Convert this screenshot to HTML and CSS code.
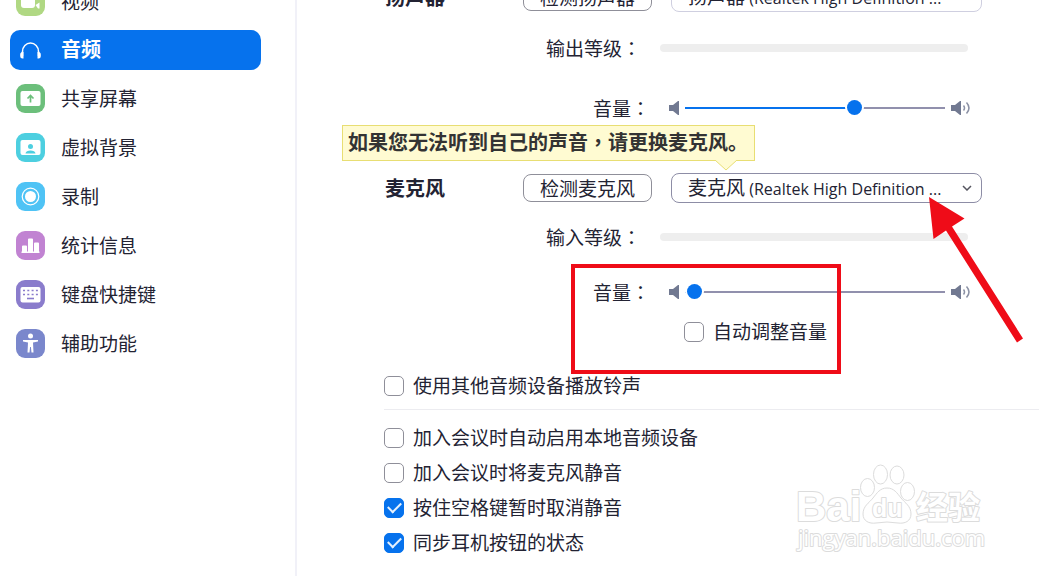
FILE: index.html
```html
<!DOCTYPE html>
<html lang="zh-CN">
<head>
<meta charset="utf-8">
<title>音频设置</title>
<link rel="stylesheet" href="styles.css">
</head>
<body>
<div class="settings">
  <nav class="sidebar">
    <a class="nav-item" href="#video">
      <svg class="nav-icon" viewBox="0 0 29 29"><rect width="29" height="29" rx="9" fill="#b0d883"/><rect x="5" y="8" width="14" height="13" rx="3" fill="#fff"/><path d="M19.500 18l4-2.500v6h-1.500z" fill="#fff"/></svg>
      <span>视频</span>
    </a>
    <a class="nav-item active" href="#audio" aria-current="page">
      <svg class="nav-icon" viewBox="0 0 29 29"><path d="M6.500 20V15.500a8 8.500 0 0 1 16 0V20" fill="none" stroke="#fff" stroke-width="1.500"/><path d="M7.500 16v6.500H6.500a2.300 2.300 0 0 1-2.300-2.300v-1.500a2.500 2.500 0 0 1 3.300-2.700zM21.500 16v6.500h1a2.300 2.300 0 0 0 2.300-2.300v-1.500a2.500 2.500 0 0 0-3.300-2.700z" fill="#fff"/></svg>
      <span>音频</span>
    </a>
    <a class="nav-item" href="#share">
      <svg class="nav-icon" viewBox="0 0 29 29"><rect width="29" height="29" rx="9" fill="#6cbf7b"/><rect x="4.500" y="7" width="20" height="15" rx="2" fill="#fff"/><path d="M14.500 18.500v-6M11.500 14.500l3-3 3 3" fill="none" stroke="#6cbf7b" stroke-width="1.700"/></svg>
      <span>共享屏幕</span>
    </a>
    <a class="nav-item" href="#background">
      <svg class="nav-icon" viewBox="0 0 29 29"><rect width="29" height="29" rx="9" fill="#4dcfe0"/><rect x="4.500" y="7" width="20" height="15" rx="2" fill="#fff"/><circle cx="14.500" cy="13.500" r="2.500" fill="#4dcfe0"/><path d="M9.500 20.500c0-4 10-4 10 0z" fill="#4dcfe0"/></svg>
      <span>虚拟背景</span>
    </a>
    <a class="nav-item" href="#record">
      <svg class="nav-icon" viewBox="0 0 29 29"><rect width="29" height="29" rx="9" fill="#4fc3f5"/><circle cx="14.500" cy="14.500" r="8.300" fill="none" stroke="#fff" stroke-width="1.200"/><circle cx="14.500" cy="14.500" r="5.500" fill="#fff"/></svg>
      <span>录制</span>
    </a>
    <a class="nav-item" href="#stats">
      <svg class="nav-icon" viewBox="0 0 29 29"><rect width="29" height="29" rx="9" fill="#c183d2"/><path d="M6 21v-5.500q0-1 1-1h3q1 0 1 1V21zM12 21V8.500q0-1 1-1h3q1 0 1 1V21zM18 21v-8.500q0-1 1-1h3q1 0 1 1V21zM5.500 20.500h18v1.500h-18z" fill="#fff"/></svg>
      <span>统计信息</span>
    </a>
    <a class="nav-item" href="#shortcuts">
      <svg class="nav-icon" viewBox="0 0 29 29"><rect width="29" height="29" rx="9" fill="#8a7ccc"/><rect x="4.500" y="7" width="20" height="15.500" rx="2" fill="#fff"/><path d="M7 10.500h15M7 14.500h15" stroke="#8a7ccc" stroke-width="1.600" stroke-dasharray="2 2.300"/><path d="M11 18.500h7" stroke="#8a7ccc" stroke-width="1.600"/></svg>
      <span>键盘快捷键</span>
    </a>
    <a class="nav-item" href="#accessibility">
      <svg class="nav-icon" viewBox="0 0 29 29"><rect width="29" height="29" rx="9" fill="#7a87cc"/><circle cx="14.500" cy="7" r="2.500" fill="#fff"/><path d="M7 11h15v1.500l-5 1L17.500 23.500h-2l-.6-5.500h-.8l-.6 5.500h-2L12 13.500l-5-1z" fill="#fff"/></svg>
      <span>辅助功能</span>
    </a>
  </nav>

  <main class="panel">
    <section class="device">
      <div class="row">
        <h2 class="title">扬声器</h2>
        <button class="test" type="button">检测扬声器</button>
        <div class="picker muted">
          <select aria-label="扬声器"><option>扬声器 (Realtek High Definition ...</option></select>
          <span class="picker-text" aria-hidden="true">扬声器 <small>(Realtek High Definition ...</small></span>
        </div>
      </div>
      <div class="row level">
        <span class="level-label">输出等级<span class="colon" lang="zh-TW">：</span></span>
        <div class="meter"></div>
      </div>
      <div class="row volume">
        <label class="volume-label" for="out">音量<span class="colon" lang="zh-TW">：</span></label>
        <div class="slider">
          <svg class="quiet" viewBox="0 0 10 14"><path d="M0 4h4l5-4h1v14H9l-5-4H0z"/></svg>
          <input id="out" type="range" min="0" max="100" value="66" style="--fill: 66%">
          <svg class="loud" viewBox="0 0 20 14"><path d="M0 4h4l5-4h1v14H9l-5-4H0z"/><path class="wave" d="M12.500 4.500q2 2.500 0 5M15.500 1.500q5 5.500 0 11"/></svg>
        </div>
      </div>
    </section>

    <section class="device microphone">
      <div class="row">
        <h2 class="title">麦克风</h2>
        <button class="test" type="button">检测麦克风</button>
        <div class="picker">
          <select aria-label="麦克风"><option>麦克风 (Realtek High Definition ...</option></select>
          <span class="picker-text" aria-hidden="true">麦克风 <small>(Realtek High Definition ...</small></span>
          <svg class="chevron" viewBox="0 0 10 6"><path d="M1 1l4 4 4-4"/></svg>
        </div>
      </div>
      <div class="tip" role="tooltip">如果您无法听到自己的声音<span class="colon" lang="zh-TW">，</span>请更换麦克风。
        <svg class="tail" viewBox="0 0 22 12"><path d="M0 0L11 10L22 0" /></svg>
      </div>
      <div class="row level">
        <span class="level-label">输入等级<span class="colon" lang="zh-TW">：</span></span>
        <div class="meter"></div>
      </div>
      <div class="row volume">
        <label class="volume-label" for="in">音量<span class="colon" lang="zh-TW">：</span></label>
        <div class="slider">
          <svg class="quiet" viewBox="0 0 10 14"><path d="M0 4h4l5-4h1v14H9l-5-4H0z"/></svg>
          <input id="in" type="range" min="0" max="100" value="1" style="--fill: 1%">
          <svg class="loud" viewBox="0 0 20 14"><path d="M0 4h4l5-4h1v14H9l-5-4H0z"/><path class="wave" d="M12.500 4.500q2 2.500 0 5M15.500 1.500q5 5.500 0 11"/></svg>
        </div>
      </div>
      <label class="check auto"><input type="checkbox"><span>自动调整音量</span></label>
      <div class="highlight"></div>
    </section>

    <label class="check ring"><input type="checkbox"><span>使用其他音频设备播放铃声</span></label>

    <section class="options">
      <label class="check"><input type="checkbox"><span>加入会议时自动启用本地音频设备</span></label>
      <label class="check"><input type="checkbox"><span>加入会议时将麦克风静音</span></label>
      <label class="check"><input type="checkbox" checked><span>按住空格键暂时取消静音</span></label>
      <label class="check"><input type="checkbox" checked><span>同步耳机按钮的状态</span></label>
    </section>

    <svg class="arrow" viewBox="0 0 98 150"><path d="M2 2L37.500 23.500L25 31.500L96 143.500L90 147.500L19 35.500L6.500 44z"/></svg>

    <svg class="watermark" viewBox="0 0 200 100">
      <text class="wm-bold" x="6" y="71" font-size="42">Bai</text>
      <path d="M97 38c7 0 10 5 14 10s10 8 10 16c0 7-6 10-13 9q-11-2-22 0c-7 1-13-2-13-9c0-8 6-11 10-16s7-10 14-10z"/>
      <ellipse cx="77.500" cy="37.500" rx="7" ry="9"/>
      <ellipse cx="90.500" cy="24.500" rx="7" ry="9.500"/>
      <ellipse cx="107" cy="25" rx="7" ry="9"/>
      <ellipse cx="117.500" cy="41.500" rx="7" ry="9"/>
      <text class="wm-bold" x="82" y="67" font-size="25">du</text>
      <text class="wm-cjk" x="126" y="69" font-size="32">经验</text>
      <text class="wm-url" x="8" y="96" font-size="22">jingyan.baidu.com</text>
    </svg>
  </main>
</div>
</body>
</html>
```

FILE: styles.css
```css
* {
  box-sizing: border-box;
}

body {
  margin: 0;
  height: 100vh;
  overflow: hidden;
  background: #fff;
  color: #232333;
  font: 19px/30px "Noto Sans CJK SC", sans-serif;
}

.settings {
  display: flex;
  min-height: 100vh;
}

/* Sidebar, scrolled slightly past its first entry */
.sidebar {
  flex: 0 0 297px;
  display: flex;
  flex-direction: column;
  gap: 8px;
  margin-top: -19px;
  padding: 0 34px 0 10px;
  border-right: 2px solid #f1f1f8;
}

.nav-item {
  display: flex;
  align-items: center;
  gap: 16px;
  height: 41px;
  padding-left: 6px;
  border-radius: 10px;
  color: inherit;
  text-decoration: none;
}

.nav-item.active {
  height: 40px;
  background: #0672ed;
  color: #fff;
  font-size: 20px;
  font-weight: 700;
}

.nav-item span,
.check span {
  padding-bottom: 2px;
}

.nav-icon {
  width: 29px;
  height: 29px;
}

/* Audio panel */
.panel {
  position: relative;
  flex: 1;
  min-width: 0;
  margin-top: -18px;
  padding-left: 88px;
}

.device {
  position: relative;
}

.row {
  display: flex;
  align-items: center;
  gap: 19px;
  height: 30px;
}

.title {
  width: 119px;
  margin: 0;
  font-size: 20px;
  font-weight: 700;
}

.test {
  width: 129px;
  height: 28px;
  padding: 0;
  border: 1px solid #8f8f99;
  border-radius: 8px;
  background: #fff;
  color: inherit;
  font: inherit;
  line-height: 24px;
}

.picker {
  position: relative;
  width: 311px;
  height: 30px;
}

.picker select {
  appearance: none;
  width: 100%;
  height: 100%;
  padding: 0 40px 0 16px;
  border: 1px solid #8d8da6;
  border-radius: 8px;
  background: #fff;
  color: transparent;
  font: inherit;
}

.picker.muted select {
  border-color: #cfcfe0;
}

.picker-text {
  position: absolute;
  inset: 0 40px 0 17px;
  line-height: 28px;
  white-space: nowrap;
  pointer-events: none;
}

.picker-text small {
  font: 16px "Open Sans", "Noto Sans", sans-serif;
}

.chevron {
  position: absolute;
  top: 12px;
  right: 10px;
  width: 10px;
  height: 6px;
  fill: none;
  stroke: #55555f;
  stroke-width: 1.5;
}

.level {
  margin-top: 21px;
}

.level-label {
  width: 256px;
  text-align: right;
}

.colon {
  font-family: "Noto Sans CJK TC", sans-serif;
}

.meter {
  width: 308px;
  height: 8px;
  border-radius: 4px;
  background: #eee;
}

.volume {
  margin-top: 30px;
}

.volume-label {
  width: 265px;
  text-align: right;
}

.slider {
  display: flex;
  align-items: center;
  gap: 6px;
}

.slider svg {
  height: 14px;
  fill: #717991;
}

.slider .quiet {
  width: 10px;
}

.slider .loud {
  width: 20px;
}

.slider .wave {
  fill: none;
  stroke: #8b91a5;
  stroke-width: 1.5;
}

.slider input {
  appearance: none;
  width: 260px;
  height: 16px;
  margin: 0;
  background: transparent;
}

.slider input::-webkit-slider-runnable-track {
  height: 2px;
  background: linear-gradient(to right, #0672ed var(--fill), #9190ad var(--fill));
}

.slider input::-webkit-slider-thumb {
  appearance: none;
  width: 15px;
  height: 15px;
  margin-top: -7px;
  border-radius: 50%;
  background: #0672ed;
  box-shadow: 0 0 0 2px #fff;
}

.microphone {
  margin-top: 50px;
}

.microphone .level {
  margin-top: 19px;
}

.microphone .volume {
  margin-top: 25px;
}

.tip {
  position: absolute;
  top: -48px;
  left: -43px;
  height: 36px;
  padding: 0 6px 0 5px;
  border: 1px solid #e8de73;
  background: #fffbd2;
  color: #333;
  font-size: 20px;
  font-weight: 700;
  line-height: 32px;
  white-space: nowrap;
}

.tail {
  position: absolute;
  top: 34px;
  right: 17px;
  width: 22px;
  height: 12px;
  fill: #fffbd2;
  stroke: #e8de73;
}

/* Check boxes */
.check {
  display: flex;
  align-items: center;
  gap: 9px;
  width: max-content;
  height: 30px;
}

.check input {
  appearance: none;
  width: 20px;
  height: 20px;
  margin: 0;
  border: 1px solid #8f8f99;
  border-radius: 5px;
  background: #fff;
}

.check input:checked {
  display: grid;
  place-items: center;
  border-color: #0672ed;
  background: #0672ed;
}

.check input:checked::after {
  content: "";
  width: 11px;
  height: 6px;
  margin-bottom: 4px;
  border: solid #e6f1fd;
  border-width: 0 0 2px 2px;
  rotate: -45deg;
}

.auto {
  margin: 10px 0 0 299px;
}

.ring {
  margin: 24px 0 8px -1px;
}

.options {
  margin-left: -1px;
  padding-top: 10px;
  border-top: 1px solid #ececf0;
}

.options .check {
  height: 35px;
}

/* Annotations over the panel */
.highlight {
  position: absolute;
  top: 91px;
  left: 186px;
  width: 270px;
  height: 110px;
  border: 4px solid #ef0c18;
  pointer-events: none;
}

.arrow {
  position: absolute;
  top: 213px;
  left: 630px;
  width: 98px;
  height: 150px;
  fill: #ef0c18;
  pointer-events: none;
}

.watermark {
  position: absolute;
  top: 468px;
  left: 493px;
  width: 200px;
  height: 100px;
  overflow: visible;
  fill: #fff;
  stroke: #dcdcdc;
  pointer-events: none;
}

.watermark text {
  paint-order: stroke;
  stroke-width: 2px;
  stroke-linejoin: round;
}

.wm-bold {
  font-family: "Liberation Sans", sans-serif;
  font-weight: 700;
}

.wm-cjk {
  font-family: "Noto Sans CJK SC", sans-serif;
  font-weight: 700;
}

.wm-url {
  font-family: "Open Sans", sans-serif;
}
```
